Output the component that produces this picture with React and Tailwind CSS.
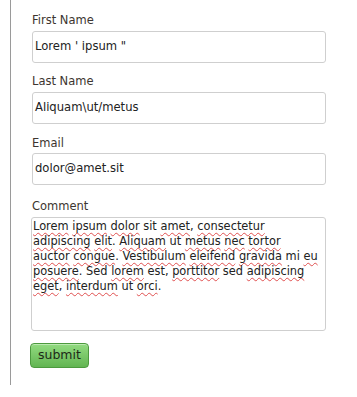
const words = ["Lorem", "ipsum", "dolor", "sit", "amet,", "consectetur", "adipiscing", "elit.", "Aliquam", "ut", "metus", "nec", "tortor", "auctor", "congue.", "Vestibulum", "eleifend", "gravida", "mi", "eu", "posuere.", "Sed", "lorem", "est,", "porttitor", "sed", "adipiscing", "eget,", "interdum", "ut", "orci."];
const plain = ["sit", "ut", "mi", "Sed", "est", "sed"];

function Label({ children, className }) {
  return <label className={"text-[11.5px] text-[#3d3530] leading-[14px] " + className}>{children}</label>;
}

function Field({ children, h }) {
  return (
    <div className={"border border-[#cfcfcf] rounded-[3px] flex items-center px-[2px] text-[11.6px] text-[#222] " + h}>{children}</div>
  );
}

export default function App() {
  const font = { fontFamily: '"DejaVu Sans", Verdana, sans-serif' };
  return (
    <div className="w-[357px] h-[397px] bg-white relative" style={font}>
      <div className="absolute left-[10px] top-0 w-px h-[385px] bg-[#9a9a9a]" />
      <div className="flex flex-col ml-[32px] pt-[13px] w-[294px]">
        <Label className="mb-[4px]">First Name</Label>
        <Field h="h-[32px]">Lorem ' ipsum "</Field>
        <Label className="mt-[11px] mb-[4px]">Last Name</Label>
        <Field h="h-[32px]">Aliquam\ut/metus</Field>
        <Label className="mt-[12px] mb-[3px]">Email</Label>
        <Field h="h-[32px]">dolor@amet.sit</Field>
        <Label className="mt-[14px] mb-[4px]">Comment</Label>
        <div className="h-[114px] -ml-px border border-[#cfcfcf] rounded-[3px] pl-[1px] pr-[6px] pt-[1px] text-[11.4px] leading-[15px] text-[#222]">
          {words.map((w, i) => {
            const core = w.replace(/[.,]$/, "");
            const punct = /[.,]$/.test(w) ? w.slice(-1) : "";
            const under = !plain.includes(core);
            return (
              <span key={i}>
                <span className={under ? "underline decoration-wavy decoration-[#e05050] decoration-1 underline-offset-2" : ""}>{core}</span>
                {punct}{" "}
              </span>
            );
          })}
        </div>
        <div className="mt-[12px] flex">
          <button className="-ml-[2px] h-[25px] px-[7px] rounded-[4px] border border-[#4c9a3e] bg-gradient-to-b from-[#92db80] to-[#62b552] text-[12.5px] text-[#1d2a18] shadow-[inset_0_1px_0_rgba(255,255,255,0.4)]">submit</button>
        </div>
      </div>
    </div>
  );
}
